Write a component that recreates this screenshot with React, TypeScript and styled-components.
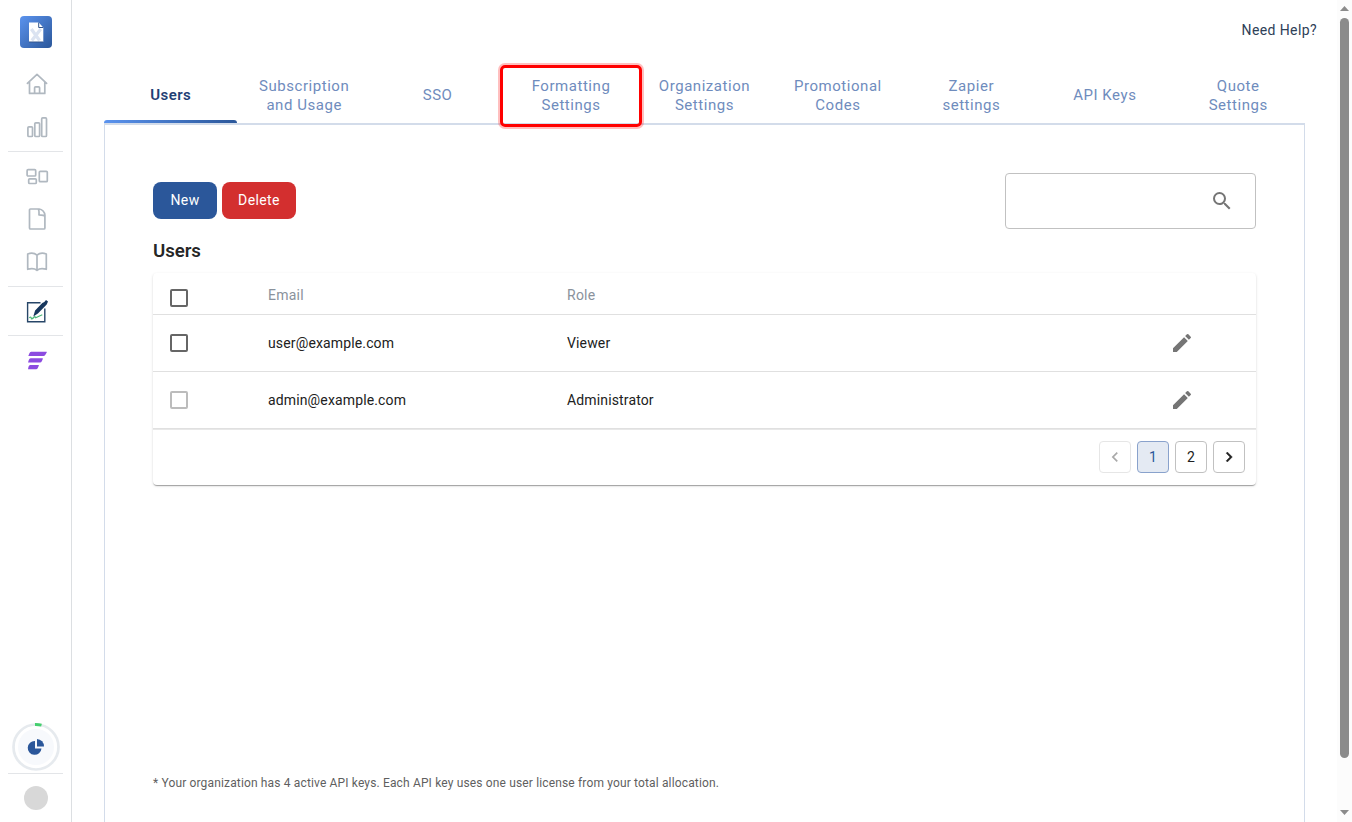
import React from "react";
import styled, { createGlobalStyle, css } from "styled-components";

const GlobalStyle = createGlobalStyle`
  * { box-sizing: border-box; }
  html, body { margin: 0; height: 100%; overflow: hidden; background: #fff; }
  body { font-family: Roboto, "Liberation Sans", sans-serif; color: rgba(0, 0, 0, 0.87); }
  button { font-family: inherit; }
`;

const Page = styled.div`
  display: flex;
  width: 1352px;
  height: 822px;
  overflow: hidden;
`;

const Sidebar = styled.nav`
  display: flex;
  flex-direction: column;
  width: 72px;
  flex: none;
  border-right: 1px solid #dcdfe2;
`;

const LogoSlot = styled.div`
  display: flex;
  height: 63px;
  padding: 16px 0 0 20px;
  flex: none;
`;

const NavItem = styled.a<{ $height: number }>`
  display: flex;
  align-items: center;
  height: ${(p) => p.$height}px;
  padding-left: 25px;
  flex: none;
`;

const NavDivider = styled.hr`
  width: 55px;
  height: 1px;
  margin: 0 0 0 8px;
  border: 0;
  flex: none;
  background: #e3e5e8;
`;

const SidebarBottom = styled.div`
  display: flex;
  flex-direction: column;
  margin-top: auto;
`;

const UsageRing = styled.div`
  height: 50px;
  padding-left: 12px;
`;

const Avatar = styled.div`
  width: 24px;
  height: 24px;
  margin: 12px 0 12px 24px;
  border-radius: 50%;
  background: #d8d8d8;
`;

const Main = styled.main`
  display: flex;
  flex-direction: column;
  width: 1265px;
  padding: 0 32px;
`;

const TopBar = styled.header`
  display: flex;
  justify-content: flex-end;
  height: 66px;
  padding: 20px 0 0;
  margin-right: -12px;
  flex: none;
`;

const HelpLink = styled.a`
  font-size: 14px;
  line-height: 20px;
  letter-spacing: 0.4px;
  color: #2e4057;
`;

const TabList = styled.div`
  display: flex;
  width: 1201px;
  height: 59px;
  flex: none;
  border-bottom: 2px solid #d3dcea;
`;

const Tab = styled.button<{ $active?: boolean; $marked?: boolean }>`
  position: relative;
  display: flex;
  flex: 1 1 0;
  align-items: center;
  justify-content: center;
  padding: 2px 16px 0;
  border: 0;
  background: none;
  font-size: 15px;
  line-height: 19px;
  letter-spacing: 0.54px;
  color: #6f8cbd;
  ${(p) =>
    p.$active &&
    css`
      font-weight: 600;
      letter-spacing: 0.4px;
      color: #1f4075;
      &::after {
        content: "";
        position: absolute;
        inset: auto 0 0 0;
        height: 3px;
        border-radius: 3px 3px 0 0;
        background: linear-gradient(90deg, #5b93ee, #2b579a);
      }
    `}
  ${(p) =>
    p.$marked &&
    css`
      &::after {
        content: "";
        position: absolute;
        inset: -1px -4px -4px -4px;
        border: 3px solid #ff0000;
        border-radius: 5px;
        box-shadow: 0 0 0 2px rgba(255, 0, 0, 0.25);
      }
    `}
`;

const Panel = styled.section`
  display: flex;
  flex-direction: column;
  flex: 1;
  width: 1201px;
  padding: 48px 48px 0;
  border: solid #d3dcea;
  border-width: 0 1px;
`;

const Toolbar = styled.div`
  display: flex;
  align-items: flex-start;
  justify-content: space-between;
  height: 67px;
`;

const ButtonGroup = styled.div`
  display: flex;
  gap: 5px;
  padding-top: 9px;
`;

const ActionButton = styled.button<{ $danger?: boolean }>`
  width: ${(p) => (p.$danger ? 74 : 64)}px;
  height: 37px;
  padding: 0 0 2px;
  border: 0;
  border-radius: 8px;
  background: ${(p) => (p.$danger ? "#d32f2f" : "#2b579a")};
  color: #fff;
  font-size: 14px;
  letter-spacing: 0.4px;
`;

const SearchBox = styled.div`
  display: flex;
  align-items: center;
  justify-content: flex-end;
  width: 251px;
  height: 56px;
  padding-right: 21px;
  border: 1px solid #c1c1c1;
  border-radius: 4px;
`;

const Heading = styled.h2`
  height: 33px;
  margin: 0;
  font-size: 18.72px;
  font-weight: 600;
  letter-spacing: -0.1px;
  line-height: 22px;
`;

const Card = styled.div`
  height: 212px;
  border-radius: 4px;
  background: #fff;
  box-shadow: 0 2px 1px -1px rgba(0, 0, 0, 0.2), 0 1px 1px rgba(0, 0, 0, 0.14),
    0 1px 3px rgba(0, 0, 0, 0.12);
`;

const Row = styled.div<{ $header?: boolean }>`
  display: grid;
  grid-template-columns: 115px 299px 1fr 86px;
  align-items: center;
  height: ${(p) => (p.$header ? 42 : 57)}px;
  border-bottom: 1px solid #e0e0e0;
  font-size: 14px;
  letter-spacing: ${(p) => (p.$header ? 0.25 : 0.14)}px;
  color: ${(p) => (p.$header ? "#8a929c" : "#212121")};
`;

const HeaderText = styled.span`
  padding-top: 3px;
`;

const Checkbox = styled.span<{ $disabled?: boolean; $header?: boolean }>`
  width: 18px;
  height: 18px;
  margin: ${(p) => (p.$header ? "9px 0 0 17px" : "0 0 0 17px")};
  border: 2px solid ${(p) => (p.$disabled ? "#bcbcbc" : "#666")};
  border-radius: 2px;
`;

const Pager = styled.div`
  display: flex;
  align-items: center;
  justify-content: flex-end;
  gap: 6px;
  height: 56px;
  padding: 0 11px 1px 0;
  border-top: 1px solid #e8e8e8;
`;

const PageButton = styled.button<{ $tone?: "active" | "disabled" }>`
  display: flex;
  align-items: center;
  justify-content: center;
  width: 32px;
  height: 32px;
  padding: 0;
  border: 1px solid
    ${(p) => (p.$tone === "active" ? "#89a2cc" : p.$tone === "disabled" ? "#e6e6e6" : "#c1c1c1")};
  border-radius: 4px;
  background: ${(p) => (p.$tone === "active" ? "#e4eaf3" : "#fff")};
  color: ${(p) => (p.$tone === "active" ? "#2b579a" : p.$tone === "disabled" ? "#a9a9a9" : "#212121")};
  font-size: 14px;
`;

const Footnote = styled.p`
  margin: auto 0 31px;
  font-size: 12px;
  line-height: 16px;
  letter-spacing: 0.15px;
  color: #5f5f5f;
`;

const Scrollbar = styled.div`
  display: flex;
  flex-direction: column;
  align-items: center;
  width: 15px;
  padding: 6px 0 7px;
  background: #fcfcfc;
  flex: none;
`;

const Thumb = styled.div`
  width: 9px;
  height: 740px;
  margin: 7px 0 auto;
  border-radius: 5px;
  background: #8b8b8b;
`;

const GREY = "#b0b8c0";

function LineIcon({ children }: { children: React.ReactNode }) {
  return (
    <svg width="24" height="24" viewBox="0 0 24 24" fill="none" stroke={GREY} strokeWidth="1.7" strokeLinejoin="round" strokeLinecap="round">
      {children}
    </svg>
  );
}

function Logo() {
  return (
    <svg width="32" height="32" viewBox="0 0 32 32">
      <defs>
        <linearGradient id="logo" x1="0" y1="0" x2="1" y2="1">
          <stop offset="0" stopColor="#5b93ee" />
          <stop offset="1" stopColor="#2b579a" />
        </linearGradient>
      </defs>
      <rect width="32" height="32" rx="4" fill="url(#logo)" />
      <path d="M9 6.500h9.700l4.600 5V26H9z" fill="#fff" />
      <path d="M11.300 13l8.300 11.500M20.800 13l-9 11.500" stroke="#dbe3f1" strokeWidth="3.200" />
      <path d="M18.700 6.500v5h4.600M9 26h14.300" fill="none" stroke="#33558c" strokeWidth="1" />
    </svg>
  );
}

function PencilIcon() {
  return (
    <svg width="24" height="24" viewBox="0 0 24 24" fill="#757575">
      <path d="M3 17.250V21h3.750L17.810 9.940l-3.750-3.750L3 17.250zM20.710 7.040a1 1 0 0 0 0-1.410l-2.340-2.340a1 1 0 0 0-1.410 0l-1.830 1.830 3.750 3.750 1.830-1.830z" />
    </svg>
  );
}

const tabs: { lines: string[]; active?: boolean; marked?: boolean }[] = [
  { lines: ["Users"], active: true },
  { lines: ["Subscription", "and Usage"] },
  { lines: ["SSO"] },
  { lines: ["Formatting", "Settings"], marked: true },
  { lines: ["Organization", "Settings"] },
  { lines: ["Promotional", "Codes"] },
  { lines: ["Zapier", "settings"] },
  { lines: ["API Keys"] },
  { lines: ["Quote", "Settings"] },
];

const users = [
  { email: "user@example.com", role: "Viewer", locked: false },
  { email: "admin@example.com", role: "Administrator", locked: true },
];

export default function App() {
  return (
    <Page>
      <GlobalStyle />
      <Sidebar>
        <LogoSlot>
          <Logo />
        </LogoSlot>
        <NavItem $height={42}>
          <LineIcon>
            <path d="M2.400 11.400L12 2.400l9.600 9M4.500 10.200v11.200h15.300V10.200M9.600 21.200v-5.400q0-1 1-1h3q1 0 1 1v5.400" />
          </LineIcon>
        </NavItem>
        <NavItem $height={46}>
          <LineIcon>
            <rect x="2.900" y="10.800" width="4.600" height="9.700" rx="1" />
            <rect x="9.800" y="6.800" width="4.800" height="13.700" rx="1" />
            <rect x="16.700" y="1.900" width="4.800" height="18.600" rx="1" />
          </LineIcon>
        </NavItem>
        <NavDivider />
        <NavItem $height={48}>
          <LineIcon>
            <rect x="2.100" y="5.700" width="8.600" height="6.300" rx="1" />
            <rect x="3.700" y="14.800" width="7.600" height="4.700" rx="1" />
            <rect x="14.300" y="7.300" width="8" height="10.400" rx="1" />
          </LineIcon>
        </NavItem>
        <NavItem $height={38}>
          <LineIcon>
            <path d="M5.500 2h8.700c3 .3 5.500 3 5.700 6v13q0 1-1 1H5.500q-1 0-1-1V3q0-1 1-1zM13.300 2.200c1.200 1.500.6 3.900.7 5.800 1.900.4 4.500-.3 5.800 1.200" />
          </LineIcon>
        </NavItem>
        <NavItem $height={48}>
          <LineIcon>
            <path d="M12 5.200C9.500 3 5.500 3 2.700 4v15.300c3-.8 6.800-1 9.300 1 2.500-2 6.300-1.800 9.300-1V4C18.500 3 14.500 3 12 5.200zM12 5.200v15" />
          </LineIcon>
        </NavItem>
        <NavDivider />
        <NavItem $height={48}>
          <svg width="24" height="24" viewBox="0 0 24 24" fill="none">
            <path d="M15.500 3.700H2.600v19h17.200V9.500" stroke="#274668" strokeWidth="1.400" />
            <path d="M4.400 19c1-1.600 2-.5 2 .8 1.300.2 2.200-1.400 3.400-2.300l.8 1.200 6.700-3" stroke="#4db87a" strokeWidth="1.200" />
            <path d="M8.300 17.500l1.800-6L17.300 3.900l2-1L21 1l2 1.600-1.300 3-8.800 9z" fill="#17375e" />
          </svg>
        </NavItem>
        <NavDivider />
        <NavItem $height={48}>
          <svg width="24" height="24" viewBox="0 0 24 24" fill="#8c4be0">
            <path d="M6.200 3.700H21.500q.6 0 .2.700l-1.500 2.600q-.6 1.100-1.700 1.100H3.300l1-2.600q.6-1.800 1.900-1.800z" />
            <path d="M5.600 10.300H17.500q.6 0 .3.700l-1 2.200q-.6 1.400-1.800 1.400H3l.8-2.600q.5-1.700 1.800-1.700z" />
            <path d="M5.200 17H13.500q.6 0 .3.700l-1 2.200q-.6 1.400-1.800 1.400H3l.5-2.600Q4 17 5.200 17z" />
          </svg>
        </NavItem>
        <SidebarBottom>
          <UsageRing>
            <svg width="48" height="48" viewBox="0 0 48 48">
              <circle cx="24" cy="24" r="22.500" fill="#fff" stroke="#e6eaee" strokeWidth="2.700" />
              <circle cx="24" cy="24" r="18" fill="#f7f9fc" />
              <path d="M23 1.500a22.500 22.500 0 0 1 6.500.7" fill="none" stroke="#45cf6e" strokeWidth="2.800" />
              <path d="M23 18v7.500h6.500a6.900 6.900 0 1 1-6.500-7.500z" fill="#2b579a" />
              <path d="M25 16a7.300 7.300 0 0 1 7 7.500h-7z" fill="#2b579a" />
            </svg>
          </UsageRing>
          <NavDivider />
          <Avatar />
        </SidebarBottom>
      </Sidebar>
      <Main>
        <TopBar>
          <HelpLink>Need Help?</HelpLink>
        </TopBar>
        <TabList>
          {tabs.map((t) => (
            <Tab key={t.lines.join(" ")} $active={t.active} $marked={t.marked}>
              <span>
                {t.lines.map((line, i) => (
                  <React.Fragment key={line}>
                    {i > 0 && <br />}
                    {line}
                  </React.Fragment>
                ))}
              </span>
            </Tab>
          ))}
        </TabList>
        <Panel>
          <Toolbar>
            <ButtonGroup>
              <ActionButton>New</ActionButton>
              <ActionButton $danger>Delete</ActionButton>
            </ButtonGroup>
            <SearchBox>
              <svg width="24" height="24" viewBox="0 0 24 24" fill="#757575">
                <path d="M15.500 14h-.79l-.28-.27A6.470 6.470 0 0 0 16 9.500 6.500 6.500 0 1 0 9.500 16c1.610 0 3.090-.59 4.230-1.570l.27.28v.79l5 4.990L20.490 19l-4.990-5zm-6 0C7.010 14 5 11.990 5 9.500S7.010 5 9.500 5 14 7.010 14 9.500 11.990 14 9.500 14z" />
              </svg>
            </SearchBox>
          </Toolbar>
          <Heading>Users</Heading>
          <Card>
            <Row $header>
              <Checkbox $header />
              <HeaderText>Email</HeaderText>
              <HeaderText>Role</HeaderText>
            </Row>
            {users.map((u) => (
              <Row key={u.email}>
                <Checkbox $disabled={u.locked} />
                <span>{u.email}</span>
                <span>{u.role}</span>
                <PencilIcon />
              </Row>
            ))}
            <Pager>
              <PageButton $tone="disabled">
                <svg width="20" height="20" viewBox="0 0 24 24" fill="currentColor">
                  <path d="M15.410 7.410L14 6l-6 6 6 6 1.410-1.410L10.830 12z" />
                </svg>
              </PageButton>
              <PageButton $tone="active">1</PageButton>
              <PageButton>2</PageButton>
              <PageButton>
                <svg width="20" height="20" viewBox="0 0 24 24" fill="currentColor" stroke="currentColor" strokeWidth="0.500">
                  <path d="M10 6L8.590 7.410 13.170 12l-4.580 4.590L10 18l6-6z" />
                </svg>
              </PageButton>
            </Pager>
          </Card>
          <Footnote>
            * Your organization has 4 active API keys. Each API key uses one user license from your total allocation.
          </Footnote>
        </Panel>
      </Main>
      <Scrollbar>
        <svg width="9" height="5" viewBox="0 0 9 5">
          <path d="M4.500 0L9 5H0z" fill="#8b8b8b" />
        </svg>
        <Thumb />
        <svg width="9" height="5" viewBox="0 0 9 5">
          <path d="M0 0h9L4.500 5z" fill="#8b8b8b" />
        </svg>
      </Scrollbar>
    </Page>
  );
}
